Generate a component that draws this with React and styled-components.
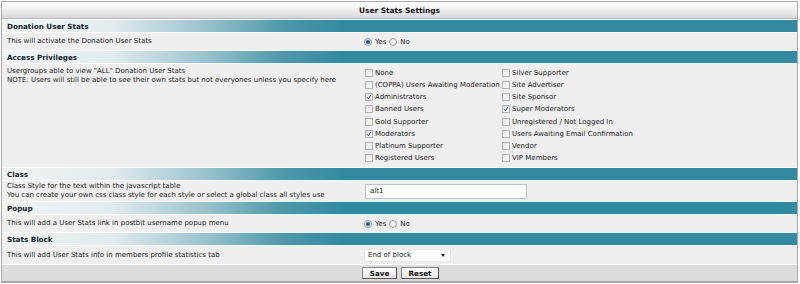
import React from "react";
import styled, { createGlobalStyle } from "styled-components";

const Global = createGlobalStyle`
  body {
    margin: 0;
    background: #ffffff;
    font-family: 'DejaVu Sans', Verdana, sans-serif;
  }
`

const Frame = styled.div`
  width: 800px;
  height: 284px;
  padding: 1px 2px 0 1px;
  box-sizing: border-box;
`

const Table = styled.div`
  border: 1px solid #a9a9a9;
  border-bottom-width: 2px;
  background: #ffffff;
  display: flex;
  flex-direction: column;
  gap: 1px;
`

const Title = styled.div`
  height: 16px;
  display: flex;
  align-items: center;
  justify-content: center;
  background: linear-gradient(#ffffff, #f3f3f6 40%, #d6d6dc);
  border-bottom: 1px solid #b8b8be;
  font-weight: bold;
  font-size: 7.4px;
  color: #111;
`

const Section = styled.div`
  height: 12px;
  display: flex;
  align-items: center;
  padding-left: 5px;
  background: linear-gradient(to right, #f1f4f5 0, #e2ebee 110px, #9cc4d0 200px, #4f98ab 280px, #338aa0 340px, #338aa0);
  font-weight: bold;
  font-size: 7.2px;
  color: #14242c;
`

const Row = styled.div`
  display: flex;
  align-items: ${p => p.top ? "flex-start" : "center"};
  min-height: ${p => p.h || 16}px;
  background: #efefef;
  color: #222;
  font-size: 7px;
`

const Label = styled.div`
  width: 355px;
  padding: ${p => p.pad || "0"};
  padding-left: 5px;
  line-height: 9px;
`

const Control = styled.div`
  flex: 1;
  display: flex;
  align-items: center;
  padding-left: ${p => p.left || 3}px;
`

const Opt = styled.span`
  display: inline-flex;
  align-items: center;
  margin-right: 3px;
  gap: 3px;
`

const Radio = styled.span`
  flex-shrink: 0;
  width: 8px;
  height: 8px;
  border-radius: 50%;
  box-sizing: border-box;
  border: 1px solid #9aa0a6;
  background: radial-gradient(circle, ${p => p.on ? "#244a70 0, #3f7fb0 1.8px, #d4dde6 2.6px" : "#ffffff 0, #eceef0 2px"}, #e2e4e8);
`

const Grid = styled.div`
  display: grid;
  grid-template-columns: 137px auto;
  grid-template-rows: repeat(8, 12.15px);
  grid-auto-flow: column;
  padding-top: 3px;
`

const Check = styled.span`
  display: inline-flex;
  align-items: center;
  gap: 2px;
  white-space: nowrap;
`

const Box = styled.span`
  flex-shrink: 0;
  width: 8px;
  height: 8px;
  box-sizing: border-box;
  border: 1px solid #b2b4b8;
  background: linear-gradient(135deg, #e4e6ea, #fafafa);
  display: inline-flex;
  align-items: center;
  justify-content: center;
`

const TextInput = styled.div`
  width: 162px;
  height: 15px;
  box-sizing: border-box;
  border: 1px solid #b9c3cf;
  background: #fff;
  padding-left: 4px;
  display: flex;
  align-items: center;
  font-size: 7px;
`

const Select = styled.div`
  width: 87px;
  height: 13px;
  box-sizing: border-box;
  border: 1px solid #e6e6e6;
  background: #fff;
  padding: 0 5px 0 3px;
  display: flex;
  align-items: center;
  justify-content: space-between;
  font-size: 7px;
`

const Arrow = styled.span`
  width: 0;
  height: 0;
  border-left: 2.5px solid transparent;
  border-right: 2.5px solid transparent;
  border-top: 3px solid #222;
`

const Buttons = styled.div`
  height: 16px;
  background: #dcdcdc;
  display: flex;
  align-items: center;
  justify-content: center;
  gap: 4px;
  padding-left: 2px;
`

const Button = styled.div`
  width: ${p => p.w}px;
  height: 12px;
  box-sizing: border-box;
  border: 1px solid #555;
  border-top-color: #888;
  border-left-color: #888;
  background: linear-gradient(#ffffff, #e6e6e6);
  display: flex;
  align-items: center;
  justify-content: center;
  font-weight: bold;
  font-size: 7.2px;
  color: #111;
`

const CheckMark = () => (
  <svg width="6" height="6" viewBox="0 0 6 6">
    <path d="M1 3.2 L2.4 4.8 L5 0.8" fill="none" stroke="#1e3f86" strokeWidth="1" />
  </svg>
)

const groups = [
  ["None", false], ["(COPPA) Users Awaiting Moderation", false], ["Administrators", true],
  ["Banned Users", false], ["Gold Supporter", false], ["Moderators", true],
  ["Platinum Supporter", false], ["Registered Users", false],
  ["Silver Supporter", false], ["Site Advertiser", false], ["Site Sponsor", false],
  ["Super Moderators", true], ["Unregistered / Not Logged In", false],
  ["Users Awaiting Email Confirmation", false], ["Vendor", false], ["VIP Members", false],
]

const YesNo = () => (
  <Control left={2}>
    <Opt><Radio on />Yes</Opt>
    <Opt><Radio />No</Opt>
  </Control>
)

export default function App() {
  return (
    <Frame>
      <Global />
      <Table>
        <Title>User Stats Settings</Title>
        <Section>Donation User Stats</Section>
        <Row h={17}>
          <Label>This will activate the Donation User Stats</Label>
          <YesNo />
        </Row>
        <Section>Access Privileges</Section>
        <Row top h={103}>
          <Label pad="3px 0 0 0">
            Usergroups able to view "ALL" Donation User Stats<br />
            NOTE: Users will still be able to see their own stats but not everyones unless you specify here
          </Label>
          <Control left={3}>
            <Grid>
              {groups.map(([name, on]) => (
                <Check key={name}><Box>{on && <CheckMark />}</Box>{name}</Check>
              ))}
            </Grid>
          </Control>
        </Row>
        <Section>Class</Section>
        <Row h={20}>
          <Label>
            Class Style for the text within the javascript table<br />
            You can create your own css class style for each style or select a global class all styles use
          </Label>
          <Control left={3}>
            <TextInput>alt1</TextInput>
          </Control>
        </Row>
        <Section>Popup</Section>
        <Row h={17}>
          <Label>This will add a User Stats link in postbit username popup menu</Label>
          <YesNo />
        </Row>
        <Section>Stats Block</Section>
        <Row h={18}>
          <Label>This will add User Stats info in members profile statistics tab</Label>
          <Control left={2}>
            <Select>End of block<Arrow /></Select>
          </Control>
        </Row>
        <Buttons>
          <Button w={35}>Save</Button>
          <Button w={38}>Reset</Button>
        </Buttons>
      </Table>
    </Frame>
  )
}
